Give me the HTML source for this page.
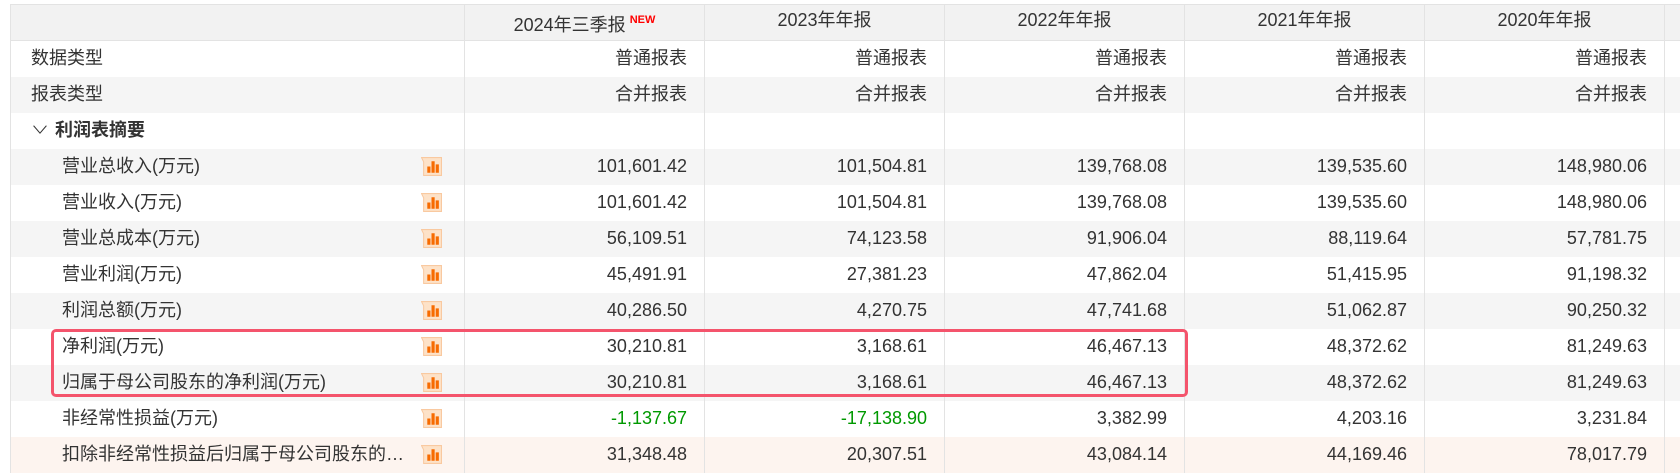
<!DOCTYPE html>
<html><head><meta charset="utf-8"><style>
*{margin:0;padding:0;box-sizing:border-box}
body{width:1680px;height:471px;overflow:hidden;background:#fff;font-family:"Liberation Sans","Noto Sans CJK SC",sans-serif;font-size:18px;color:#333;position:relative}
.t{position:absolute;left:10px;top:4px;width:1700px;border-top:1px solid #e3e3e3;border-left:1px solid #e3e3e3}
.r{display:flex;height:36px;line-height:34px}
.c{flex:none;border-right:1px solid #e3e3e3;height:36px;white-space:nowrap;overflow:hidden}
.c0{width:454px;padding-left:20px;position:relative}
.cv{width:240px;text-align:right;padding-right:17px}
.cx{width:240px}
.h{background:#f2f2f2;border-bottom:1px solid #e3e3e3;line-height:30px}
.h .cv{text-align:center;padding:0}
.g{background:#f5f5f5}
.p{background:#fdf4ef}
.sub{padding-left:51px}
.neg{color:#009900}
.ic{position:absolute;left:410px;top:8px;width:21px;height:19px}
.new{color:#f00;font-size:11px;font-weight:bold;vertical-align:8px;margin-left:4px}
.box{position:absolute;left:51px;top:329px;width:1137px;height:68px;border:3px solid #f4546c;border-radius:5px}
</style></head><body>
<div class="t">
<div class="r h"><div class="c c0"></div><div class="c cv">2024年三季报<span class="new">NEW</span></div><div class="c cv">2023年年报</div><div class="c cv">2022年年报</div><div class="c cv">2021年年报</div><div class="c cv">2020年年报</div><div class="c cx"></div></div>
<div class="r"><div class="c c0">数据类型</div><div class="c cv">普通报表</div><div class="c cv">普通报表</div><div class="c cv">普通报表</div><div class="c cv">普通报表</div><div class="c cv">普通报表</div><div class="c cx"></div></div>
<div class="r g"><div class="c c0">报表类型</div><div class="c cv">合并报表</div><div class="c cv">合并报表</div><div class="c cv">合并报表</div><div class="c cv">合并报表</div><div class="c cv">合并报表</div><div class="c cx"></div></div>
<div class="r"><div class="c c0" style="font-weight:bold"><span style="font-weight:normal;display:inline-block;transform:scaleY(.6);margin-right:6px">∨</span>利润表摘要</div><div class="c cv"></div><div class="c cv"></div><div class="c cv"></div><div class="c cv"></div><div class="c cv"></div><div class="c cx"></div></div>
<div class="r g"><div class="c c0 sub">营业总收入(万元)<svg class="ic" viewBox="0 0 20 18"><path d="M0.5 0.5H19.5V17.5H2.5V4.5L0.5 0.5Z" fill="#fde2c8" stroke="#f9c9a0"/><path d="M6 9h3v6H6zM10 4h3v11h-3zM14 7h3v8h-3z" fill="#f76b00"/></svg></div><div class="c cv">101,601.42</div><div class="c cv">101,504.81</div><div class="c cv">139,768.08</div><div class="c cv">139,535.60</div><div class="c cv">148,980.06</div><div class="c cx"></div></div>
<div class="r"><div class="c c0 sub">营业收入(万元)<svg class="ic" viewBox="0 0 20 18"><path d="M0.5 0.5H19.5V17.5H2.5V4.5L0.5 0.5Z" fill="#fde2c8" stroke="#f9c9a0"/><path d="M6 9h3v6H6zM10 4h3v11h-3zM14 7h3v8h-3z" fill="#f76b00"/></svg></div><div class="c cv">101,601.42</div><div class="c cv">101,504.81</div><div class="c cv">139,768.08</div><div class="c cv">139,535.60</div><div class="c cv">148,980.06</div><div class="c cx"></div></div>
<div class="r g"><div class="c c0 sub">营业总成本(万元)<svg class="ic" viewBox="0 0 20 18"><path d="M0.5 0.5H19.5V17.5H2.5V4.5L0.5 0.5Z" fill="#fde2c8" stroke="#f9c9a0"/><path d="M6 9h3v6H6zM10 4h3v11h-3zM14 7h3v8h-3z" fill="#f76b00"/></svg></div><div class="c cv">56,109.51</div><div class="c cv">74,123.58</div><div class="c cv">91,906.04</div><div class="c cv">88,119.64</div><div class="c cv">57,781.75</div><div class="c cx"></div></div>
<div class="r"><div class="c c0 sub">营业利润(万元)<svg class="ic" viewBox="0 0 20 18"><path d="M0.5 0.5H19.5V17.5H2.5V4.5L0.5 0.5Z" fill="#fde2c8" stroke="#f9c9a0"/><path d="M6 9h3v6H6zM10 4h3v11h-3zM14 7h3v8h-3z" fill="#f76b00"/></svg></div><div class="c cv">45,491.91</div><div class="c cv">27,381.23</div><div class="c cv">47,862.04</div><div class="c cv">51,415.95</div><div class="c cv">91,198.32</div><div class="c cx"></div></div>
<div class="r g"><div class="c c0 sub">利润总额(万元)<svg class="ic" viewBox="0 0 20 18"><path d="M0.5 0.5H19.5V17.5H2.5V4.5L0.5 0.5Z" fill="#fde2c8" stroke="#f9c9a0"/><path d="M6 9h3v6H6zM10 4h3v11h-3zM14 7h3v8h-3z" fill="#f76b00"/></svg></div><div class="c cv">40,286.50</div><div class="c cv">4,270.75</div><div class="c cv">47,741.68</div><div class="c cv">51,062.87</div><div class="c cv">90,250.32</div><div class="c cx"></div></div>
<div class="r"><div class="c c0 sub">净利润(万元)<svg class="ic" viewBox="0 0 20 18"><path d="M0.5 0.5H19.5V17.5H2.5V4.5L0.5 0.5Z" fill="#fde2c8" stroke="#f9c9a0"/><path d="M6 9h3v6H6zM10 4h3v11h-3zM14 7h3v8h-3z" fill="#f76b00"/></svg></div><div class="c cv">30,210.81</div><div class="c cv">3,168.61</div><div class="c cv">46,467.13</div><div class="c cv">48,372.62</div><div class="c cv">81,249.63</div><div class="c cx"></div></div>
<div class="r g"><div class="c c0 sub">归属于母公司股东的净利润(万元)<svg class="ic" viewBox="0 0 20 18"><path d="M0.5 0.5H19.5V17.5H2.5V4.5L0.5 0.5Z" fill="#fde2c8" stroke="#f9c9a0"/><path d="M6 9h3v6H6zM10 4h3v11h-3zM14 7h3v8h-3z" fill="#f76b00"/></svg></div><div class="c cv">30,210.81</div><div class="c cv">3,168.61</div><div class="c cv">46,467.13</div><div class="c cv">48,372.62</div><div class="c cv">81,249.63</div><div class="c cx"></div></div>
<div class="r"><div class="c c0 sub">非经常性损益(万元)<svg class="ic" viewBox="0 0 20 18"><path d="M0.5 0.5H19.5V17.5H2.5V4.5L0.5 0.5Z" fill="#fde2c8" stroke="#f9c9a0"/><path d="M6 9h3v6H6zM10 4h3v11h-3zM14 7h3v8h-3z" fill="#f76b00"/></svg></div><div class="c cv neg">-1,137.67</div><div class="c cv neg">-17,138.90</div><div class="c cv">3,382.99</div><div class="c cv">4,203.16</div><div class="c cv">3,231.84</div><div class="c cx"></div></div>
<div class="r p"><div class="c c0 sub">扣除非经常性损益后归属于母公司股东的…<svg class="ic" viewBox="0 0 20 18"><path d="M0.5 0.5H19.5V17.5H2.5V4.5L0.5 0.5Z" fill="#fde2c8" stroke="#f9c9a0"/><path d="M6 9h3v6H6zM10 4h3v11h-3zM14 7h3v8h-3z" fill="#f76b00"/></svg></div><div class="c cv">31,348.48</div><div class="c cv">20,307.51</div><div class="c cv">43,084.14</div><div class="c cv">44,169.46</div><div class="c cv">78,017.79</div><div class="c cx"></div></div>
</div>
<div class="box"></div>
</body></html>
